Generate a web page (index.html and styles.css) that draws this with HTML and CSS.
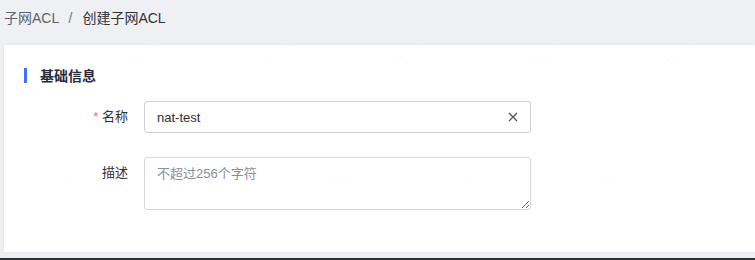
FILE: index.html
```html
<!DOCTYPE html>
<html lang="zh-CN">
<head>
<meta charset="UTF-8">
<meta name="viewport" content="width=device-width, initial-scale=1.0">
<title>创建子网ACL</title>
<link rel="stylesheet" href="styles.css">
</head>
<body>

<div class="breadcrumb">
    <span class="crumb">子网ACL</span>
    <span class="sep">/</span>
    <span class="crumb current">创建子网ACL</span>
</div>

<div class="card">

    <div class="section-title">
        <span class="bar"></span>
        <span>基础信息</span>
    </div>

    <div class="form-row">
        <label class="label"><span class="req">*</span> 名称</label>
        <div class="input-wrap">
            <input class="input" type="text" value="nat-test">
            <span class="clear">
                <svg width="10" height="10" viewBox="0 0 10 10">
                    <path d="M1 1 L9 9 M9 1 L1 9" stroke="#555" stroke-width="1.3" fill="none"/>
                </svg>
            </span>
        </div>
    </div>

    <div class="form-row">
        <label class="label">描述</label>
        <textarea class="textarea" placeholder="不超过256个字符"></textarea>
    </div>

</div>

<div class="bottom-line"></div>

<!-- 水印 -->
<div class="watermark">
    <span class="wm" style="left:122px;top:44px">天翼云</span>
    <span class="wm" style="left:257px;top:44px">天翼云</span>
    <span class="wm" style="left:391px;top:44px">天翼云</span>
    <span class="wm" style="left:525px;top:44px">天翼云</span>
    <span class="wm" style="left:659px;top:44px">天翼云</span>
    <span class="wm" style="left:57px;top:164px">天翼云</span>
    <span class="wm" style="left:191px;top:164px">天翼云</span>
    <span class="wm" style="left:325px;top:164px">天翼云</span>
    <span class="wm" style="left:460px;top:164px">天翼云</span>
    <span class="wm" style="left:594px;top:164px">天翼云</span>
</div>

</body>
</html>
```

FILE: styles.css
```css
*{
    box-sizing:border-box;
    font-family:"Liberation Sans", "Noto Sans CJK SC", sans-serif;
}

body{
    margin:0;
    height:260px;
    overflow:hidden;
    background:#eef0f4;
    color:#303133;
    position:relative;
}

.breadcrumb{
    height:45px;
    padding:9px 0 0 4px;
    font-size:14px;
    line-height:18px;
    color:#606266;
}

.sep{
    margin:0 6px;
    color:#777;
}

.crumb.current{
    color:#303133;
}

.card{
    margin-left:4px;
    height:207px;
    background:#fff;
    border-radius:2px 0 0 2px;
    box-shadow:0 0 4px rgba(0,0,0,0.06);
    padding:22px 20px 0;
}

.section-title{
    display:flex;
    align-items:center;
    height:16px;
    font-size:14px;
    font-weight:bold;
    color:#252b3a;
}

.bar{
    width:3px;
    height:15px;
    background:#3d73f5;
    margin-right:13px;
}

.form-row{
    display:flex;
    align-items:flex-start;
    margin-top:18px;
}

.form-row + .form-row{
    margin-top:24px;
}

.label{
    width:104px;
    margin-right:16px;
    text-align:right;
    font-size:13px;
    line-height:32px;
    color:#303133;
}

.req{
    color:#f56c6c;
}

.input-wrap{
    position:relative;
    width:387px;
}

.input{
    width:100%;
    height:32px;
    border:1px solid #cfd0d3;
    border-radius:3px;
    padding:0 30px 0 12px;
    font-size:13px;
    color:#303133;
    outline:none;
}

.clear{
    position:absolute;
    right:13px;
    top:11px;
    width:10px;
    height:10px;
    display:flex;
}

.textarea{
    width:387px;
    height:53px;
    border:1px solid #d6d7da;
    border-radius:3px;
    padding:7px 12px;
    font-size:13px;
    line-height:18px;
    color:#303133;
    outline:none;
    margin:0;
}

.textarea::placeholder{
    color:#8a8e99;
}

.bottom-line{
    margin-top:6px;
    height:2px;
    background:#2e2f31;
}

.watermark{
    position:absolute;
    inset:0;
    pointer-events:none;
}

.wm{
    position:absolute;
    font-size:13px;
    color:rgba(0,0,0,0.03);
    transform:rotate(-30deg);
    white-space:nowrap;
}
```
